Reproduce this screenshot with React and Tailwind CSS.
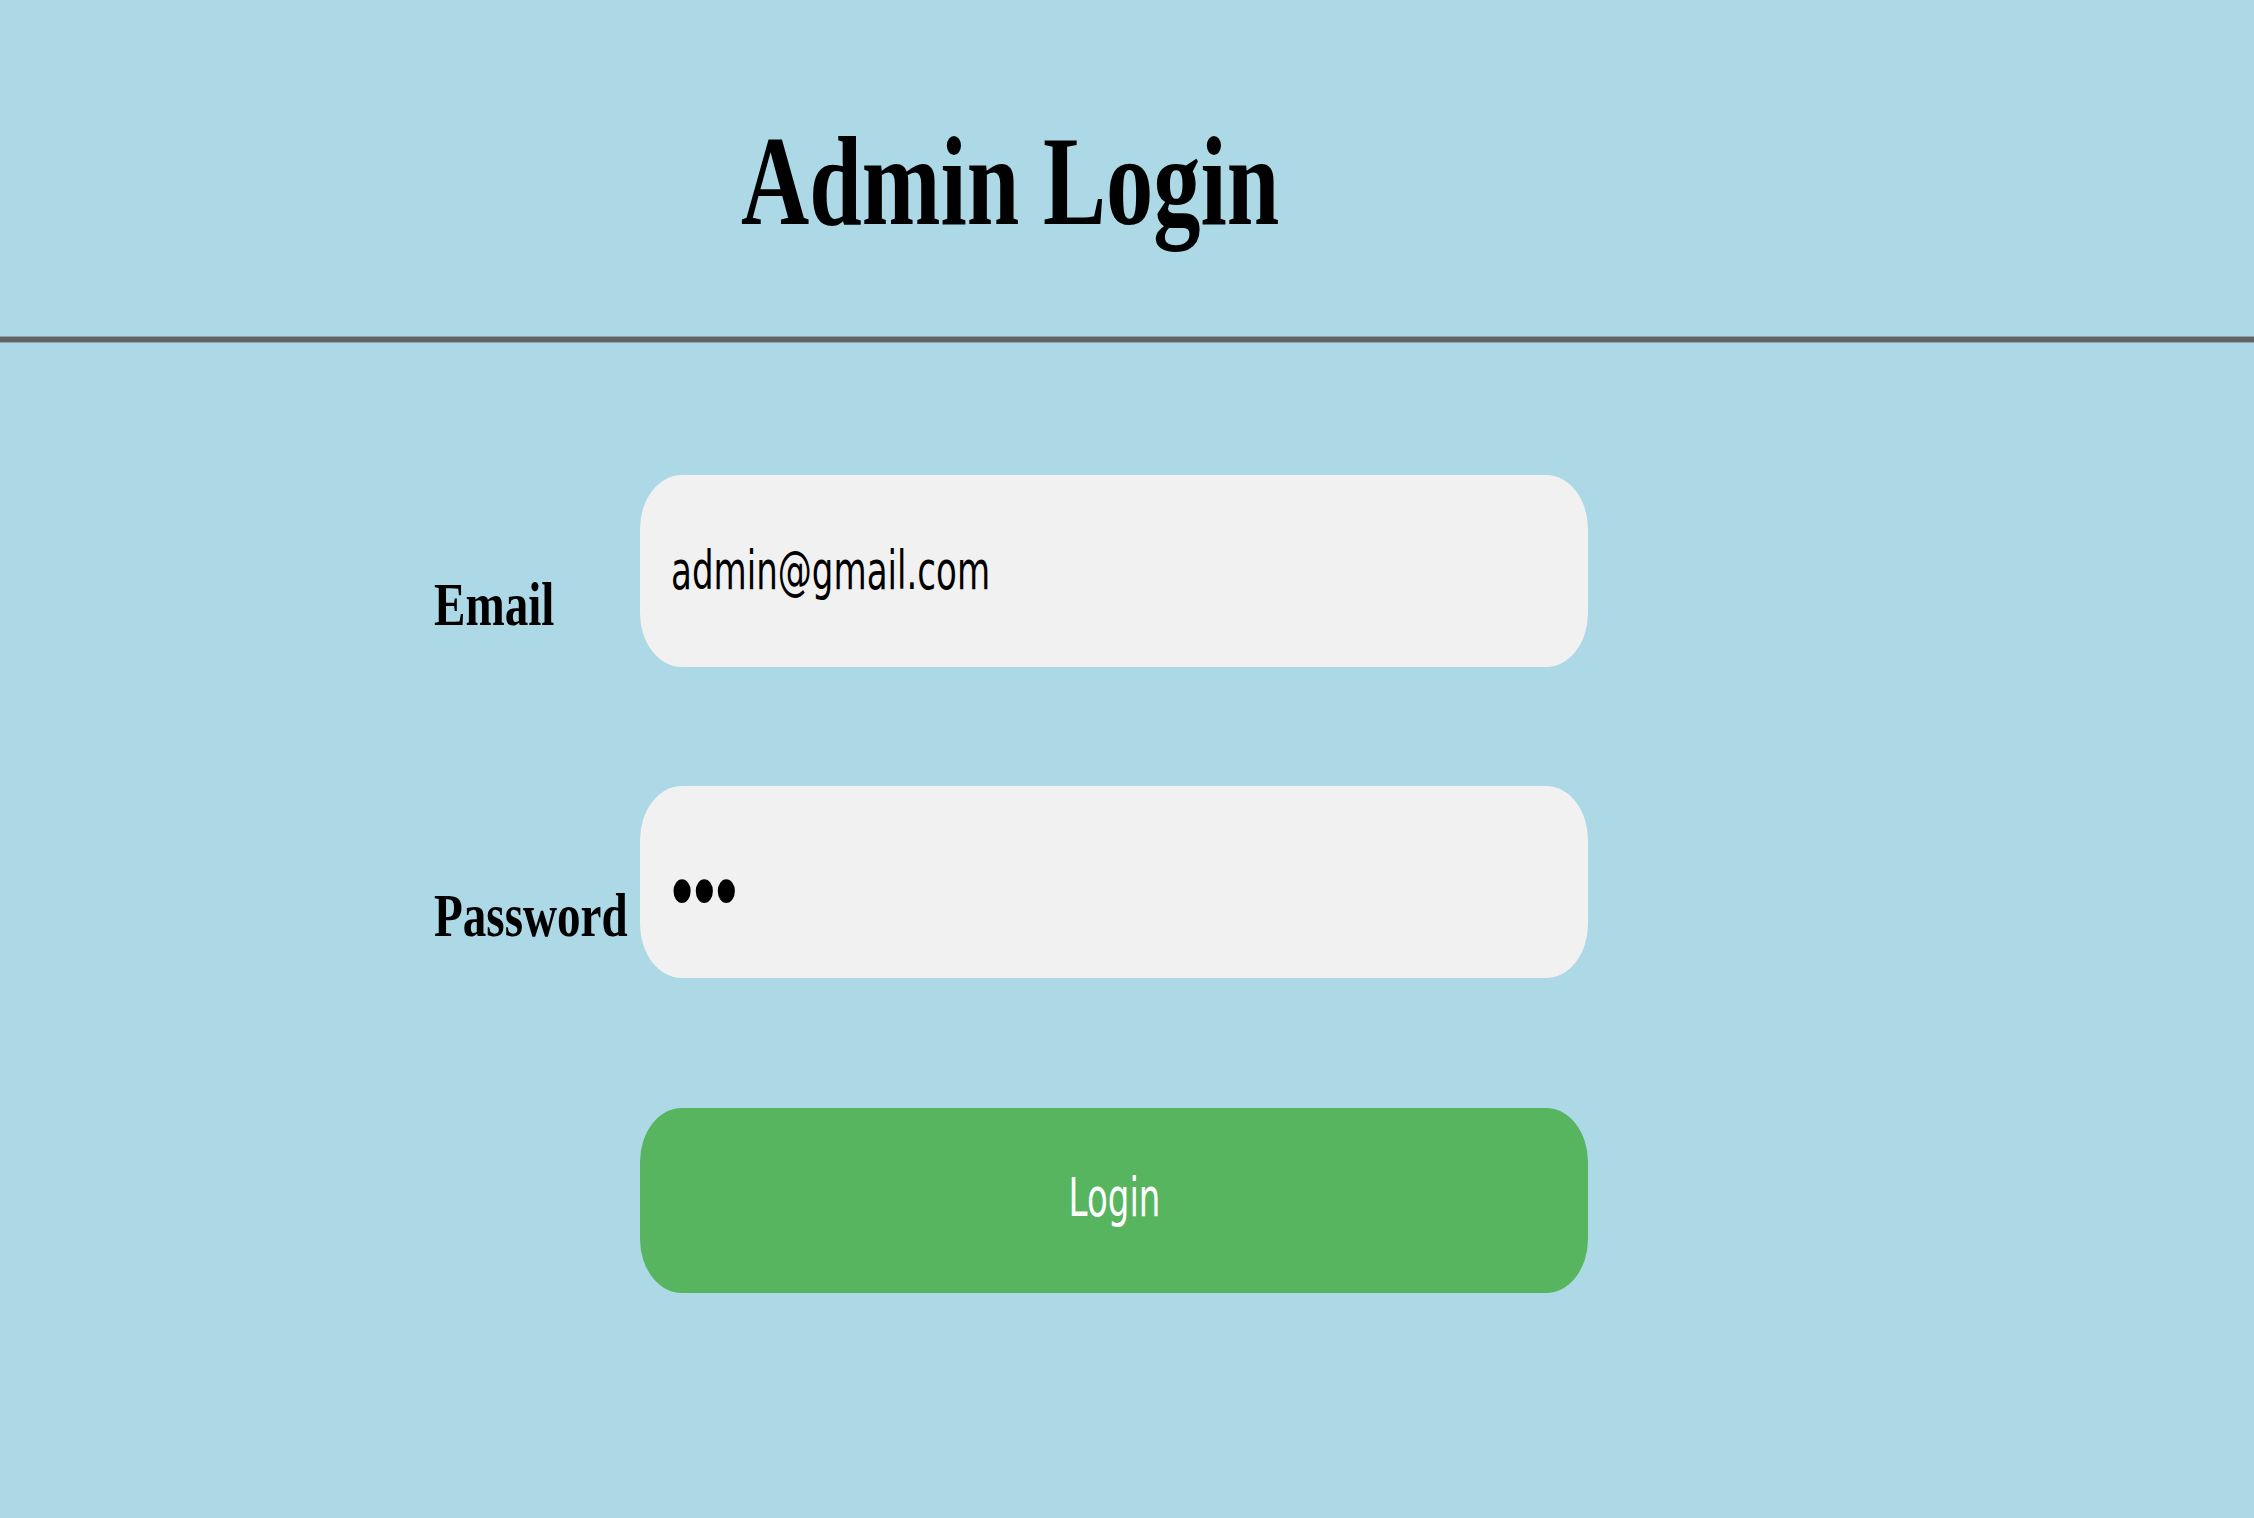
import React from 'react'

const serif = "font-['Liberation_Serif','Times_New_Roman',serif]"
const sans = "font-['DejaVu_Sans','Tahoma',sans-serif]"

function App() {
  return (
    <div className="min-h-screen bg-[#add8e6]">
      {/* Header */}
      <div className="pt-[118px] pl-[741px]">
        <h1 className={`${serif} inline-block origin-left scale-x-[0.744] whitespace-nowrap text-[127px] font-bold leading-none text-black`}>
          Admin Login
        </h1>
      </div>
      <div className="mt-[91px] h-[7px] border-y border-[#8fa3aa] bg-[#5f6366]" />

      {/* Form */}
      <form className="pt-[132px] pl-[434px]" onSubmit={(e) => e.preventDefault()}>
        <div className="flex items-end">
          <label className="w-[206px] shrink-0 pb-[32px]">
            <span className={`${serif} inline-block origin-left scale-x-[0.76] text-[62px] font-bold leading-none text-black`}>
              Email
            </span>
          </label>
          <div className="flex h-[192px] w-[948px] shrink-0 items-center overflow-hidden rounded-[42px/54px] bg-[#f1f1f1] pl-[31px]">
            <input
              type="email"
              defaultValue="admin@gmail.com"
              className={`${sans} w-[1426px] shrink-0 origin-left scale-x-[0.643] bg-transparent text-[53px] text-black outline-none`}
            />
          </div>
        </div>

        <div className="mt-[119px] flex items-end">
          <label className="w-[206px] shrink-0 pb-[32px]">
            <span className={`${serif} inline-block origin-left scale-x-[0.76] text-[62px] font-bold leading-none text-black`}>
              Password
            </span>
          </label>
          <div className="flex h-[192px] w-[948px] shrink-0 items-center overflow-hidden rounded-[42px/54px] bg-[#f1f1f1] pl-[31px] pt-[16px]">
            <input
              type="password"
              defaultValue="abc"
              className="w-[1274px] shrink-0 origin-left scale-x-[0.72] bg-transparent font-['Liberation_Sans',Arial,sans-serif] text-[88px] text-black outline-none"
            />
          </div>
        </div>

        <div className="mt-[130px] pl-[206px]">
          <button
            type="submit"
            className="flex h-[185px] w-[948px] items-center justify-center overflow-hidden rounded-[42px/54px] bg-[#57b55f] pb-[6px]"
          >
            <span className={`${sans} inline-block scale-x-[0.643] text-[53px] leading-none text-white`}>
              Login
            </span>
          </button>
        </div>
      </form>
    </div>
  )
}

export default App
